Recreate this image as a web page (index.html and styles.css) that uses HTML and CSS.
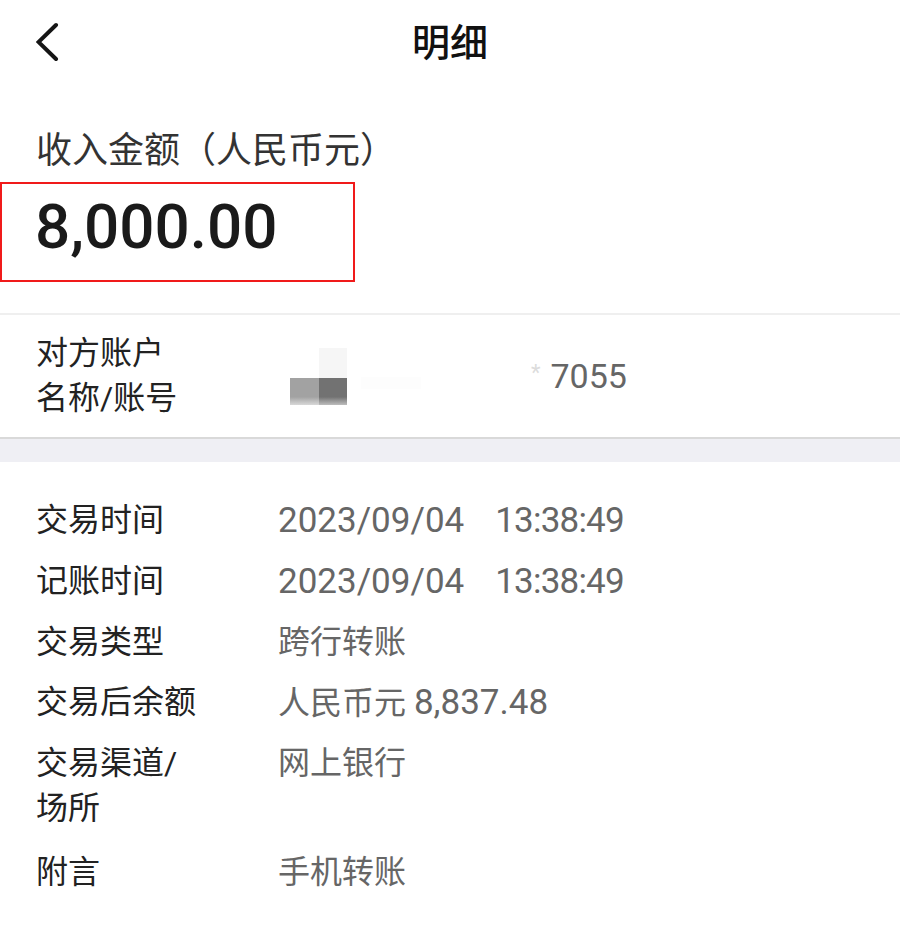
FILE: index.html
```html
<!DOCTYPE html>
<html lang="zh-CN">
<head>
<meta charset="utf-8">
<title>明细</title>
<link rel="stylesheet" href="styles.css">
</head>
<body>
<div class="page">
  <header class="nav">
    <div class="nav-left">
      <svg class="back" width="24" height="40" viewBox="0 0 24 40" aria-hidden="true">
        <polyline points="20,3 2.5,20 20,37" fill="none" stroke="#151515" stroke-width="4" stroke-linecap="round" stroke-linejoin="miter"/>
      </svg>
    </div>
    <h1 class="nav-title">明细</h1>
    <div class="nav-right"></div>
  </header>

  <section class="summary">
    <div class="summary-label">收入金额（人民币元）</div>
    <div class="amount-box">
      <div class="amount">8,000.00</div>
    </div>
  </section>

  <section class="account">
    <div class="account-label">对方账户<br>名称/账号</div>
    <div class="account-value">
      <div class="mask">
        <span class="m m1"></span><span class="m m2"></span>
        <span class="m m3"></span><span class="m m4"></span>
      </div>
      <span class="smudge"></span>
      <span class="star">*</span>
      <span class="num acct-no">7055</span>
    </div>
  </section>

  <div class="band"></div>

  <section class="details">
    <div class="row">
      <div class="k">交易时间</div>
      <div class="v"><span class="num">2023/09/04</span><span class="num time">13:38:49</span></div>
    </div>
    <div class="row">
      <div class="k">记账时间</div>
      <div class="v"><span class="num">2023/09/04</span><span class="num time">13:38:49</span></div>
    </div>
    <div class="row">
      <div class="k">交易类型</div>
      <div class="v">跨行转账</div>
    </div>
    <div class="row">
      <div class="k">交易后余额</div>
      <div class="v">人民币元 <span class="num">8,837.48</span></div>
    </div>
    <div class="row">
      <div class="k">交易渠道/<br>场所</div>
      <div class="v">网上银行</div>
    </div>
    <div class="row row-last">
      <div class="k">附言</div>
      <div class="v">手机转账</div>
    </div>
  </section>
</div>
</body>
</html>
```

FILE: styles.css
```css
* {
  box-sizing: border-box;
}

html, body {
  margin: 0;
  padding: 0;
  background: #ffffff;
}

body {
  font-family: Roboto, "Noto Sans CJK SC", sans-serif;
  color: #222222;
}

.page {
  width: 900px;
}

/* header */
.nav {
  height: 86px;
  display: grid;
  grid-template-columns: 1fr auto 1fr;
  align-items: center;
}

.nav-left {
  padding-left: 36px;
  display: flex;
  align-items: center;
}

.back {
  display: block;
  margin-top: -2px;
}

.nav-title {
  margin: 0;
  font-size: 38px;
  font-weight: 500;
  color: #111111;
  line-height: 50px;
}

/* summary */
.summary {
  padding-top: 40px;
}

.summary-label {
  padding-left: 36px;
  font-size: 36px;
  line-height: 50px;
  color: #333333;
}

.amount-box {
  margin-top: 6px;
  width: 355px;
  height: 100px;
  border: 2px solid #f01a1a;
  padding: 7px 0 0 33px;
}

.amount {
  font-size: 62px;
  font-weight: 500;
  line-height: 72px;
  color: #1a1a1a;
}

/* account row */
.account {
  margin-top: 31px;
  border-top: 2px solid #efefef;
  border-bottom: 2px solid #d9d9d9;
  height: 126px;
  display: grid;
  grid-template-columns: 242px 1fr;
  align-items: center;
  padding-left: 36px;
}

.account-label {
  font-size: 32px;
  line-height: 45px;
  color: #222222;
}

.account-value {
  display: flex;
  align-items: center;
  color: #666666;
}

.mask {
  margin-left: 12px;
  width: 57px;
  height: 57px;
  display: grid;
  grid-template-columns: 29px 28px;
  grid-template-rows: 30px 27px;
}

.m1 { background: #ffffff; }
.m2 { background: #f6f6f6; }
.m3 { background: linear-gradient(#a2a2a2 0, #a2a2a2 70%, #d8d8d8 100%); }
.m4 { background: linear-gradient(#727272 0, #727272 70%, #bdbdbd 100%); }

.smudge {
  width: 60px;
  height: 12px;
  margin-left: 14px;
  margin-top: 14px;
  background: #fdfdfd;
}

.star {
  margin-left: 110px;
  font-size: 22px;
  color: #dcdcdc;
  margin-top: -8px;
}

.acct-no {
  margin-left: 10px;
  color: #666666;
}

.band {
  height: 23px;
  background: #efeff4;
}

/* details */
.details {
  padding: 36px 0 40px 36px;
  display: flex;
  flex-direction: column;
  gap: 15px;
}

.row {
  display: grid;
  grid-template-columns: 242px 1fr;
  font-size: 32px;
  line-height: 45px;
}

.row-last {
  margin-top: 4px;
}

.k {
  color: #222222;
}

.v {
  color: #666666;
}

.num {
  font-family: Roboto, "Noto Sans CJK SC", sans-serif;
  font-size: 35px;
}

.acct-no {
  font-size: 34px;
}

.time {
  margin-left: 31px;
  letter-spacing: -0.8px;
}
```
